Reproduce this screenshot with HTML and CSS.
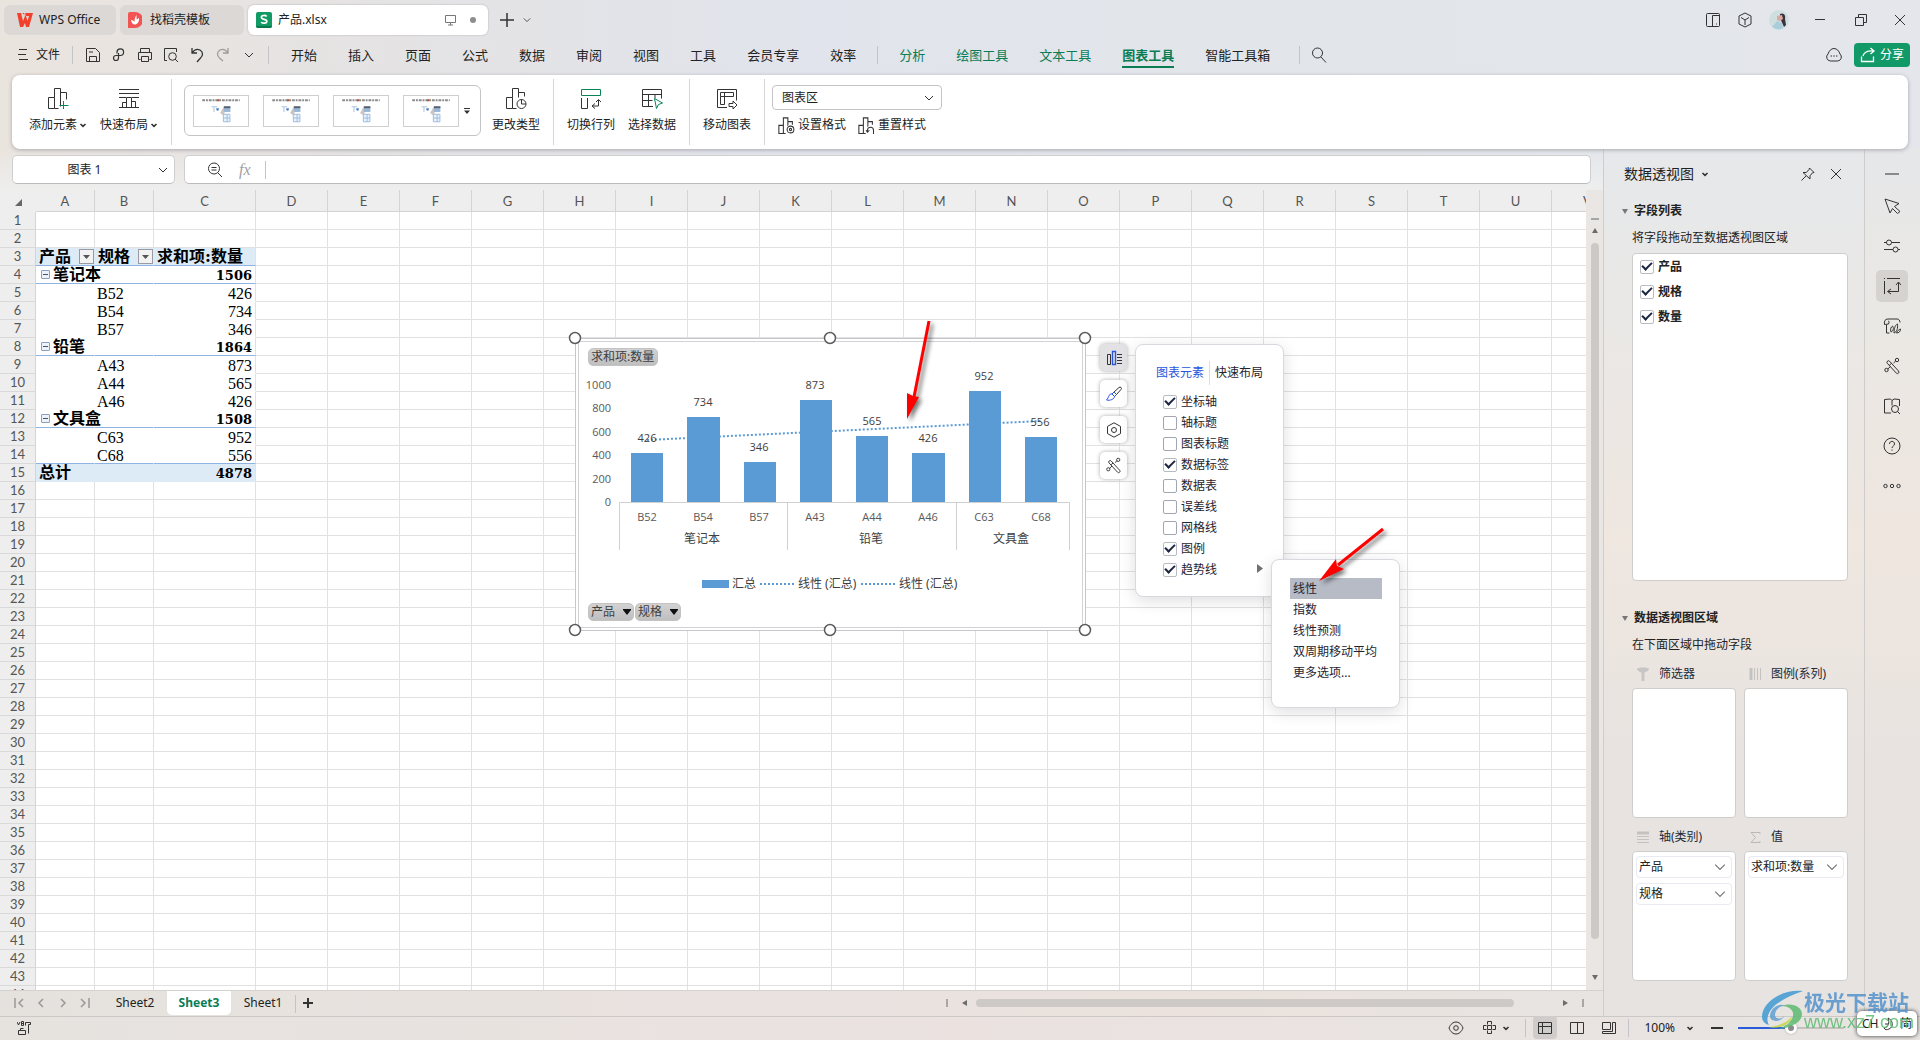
FILE: index.html
```html
<!DOCTYPE html>
<html lang="zh-CN">
<head>
<meta charset="utf-8">
<title>产品.xlsx - WPS Office</title>
<link rel="stylesheet" href="styles.css">
</head>
<body>
<svg class="defs" aria-hidden="true">
  <symbol id="chev" viewBox="0 0 10 10"><path d="M1 3l4 4 4-4"/></symbol>
  <symbol id="chev-s" viewBox="0 0 8 8"><path d="M1.500 3L4 5.400 6.500 3" stroke-width="1.600"/></symbol>
  <symbol id="wand" viewBox="0 0 18 18"><path d="M4.300 6.300a1.500 1.500 0 0 1 2.300-2l8.900 9.700a1.500 1.500 0 0 1-2.200 2.100zM6.300 8.300l2.300-2M12.600 4.200L10.500 6M4.800 12l2.700-2.500"/><circle cx="14" cy="3" r="1.700"/><circle cx="3.500" cy="13" r="1.700"/></symbol>
  <symbol id="bars" viewBox="0 0 24 24"><path d="M2.500 23.500v-11h6v11zM8.500 12.500v-10h6v6M14.500 5.500v17M14.500 7.500h6v4M8.500 23.500h3"/></symbol>
  <symbol id="mini" viewBox="0 0 56 32">
    <path d="M8 4.500h40" stroke="#8a8a8a" stroke-width="2" stroke-dasharray="3 1 2 1"/>
    <path d="M24 4.500h2" stroke="#b4552d" stroke-width="2"/>
    <path d="M18 11.500h6M20.500 12v5" stroke="#a8bdd8"/><path class="fine" d="M23 13h3l-1 3-2-1z" fill="#4a80c4"/>
    <path class="fine" d="M27 18l3-5 4-2-2 6-1 4z" fill="#cdc6c3"/>
    <rect class="fine" x="31" y="11" width="7" height="6" fill="#9bb7d6"/><rect class="fine" x="31" y="11" width="7" height="2" fill="#59616b"/>
    <path d="M30.500 19.500h7v8h-7zM30.500 23.500h7M34.500 19.500v8" fill="#eaf2fa" stroke="#9bbbe0"/>
  </symbol>
</svg>
<div class="app">
  <header class="titlebar">
    <div class="doc-tabs">
      <button class="doc-tab wps"><svg width="16" height="14" viewBox="0 0 16 14"><path class="fine" d="M0 0h4l2 8 2-5-1-3h9l-4 14H9L8 10l-2 4H3zM5 0l3 0 2.500 8L12 3H9z" fill="#f3402c" fill-rule="evenodd"/></svg><span>WPS Office</span></button>
      <button class="doc-tab tpl"><svg width="14" height="16" viewBox="0 0 14 16"><path class="fine" d="M0 2a2 2 0 0 1 2-2h5a8 8 0 0 1 0 16H0z" fill="#f15453"/><path class="fine" d="M3 8c2 0 3 1 3.500 2C6.500 7 7 5 8.500 3c0 2 0 3 .2 4.500L11 6c.5 4-2 6.500-4 6.500S3.500 11 3 8z" fill="#fff"/></svg><span>找稻壳模板</span></button>
      <button class="doc-tab active"><svg width="16" height="16" viewBox="0 0 16 16"><rect class="fine" width="16" height="16" rx="2" fill="#119a64"/><path class="fine" d="M0 14h16v0a2 2 0 0 1-2 2H2a2 2 0 0 1-2-2z" fill="#0a7a4c"/><path d="M10.700 4.500C9.500 3 5.400 3 5.400 5.300c0 2.700 5.400 1.400 5.400 4 0 2.400-4.300 2.400-5.600.7" stroke="#fff" stroke-width="1.700"/></svg><span class="grow">产品.xlsx</span><svg width="14" height="14" viewBox="0 0 14 14" stroke="#777"><path d="M1.500 2.500h10v7h-10zM4 12h5M6.500 9.500V12"/></svg><i class="dot"></i></button>
      <button class="bare" aria-label="新建"><svg width="14" height="14" viewBox="0 0 14 14" stroke-width="1.500"><path d="M7 0v14M0 7h14"/></svg></button>
      <button class="bare" aria-label="更多标签"><svg width="8" height="8"><use href="#chev"/></svg></button>
    </div>
    <div class="win">
      <svg width="16" height="16" viewBox="0 0 16 16"><path d="M2.500 1.500h11a1 1 0 0 1 1 1v11a1 1 0 0 1-1 1h-11a1 1 0 0 1-1-1v-11a1 1 0 0 1 1-1zM7.500 14V3.500h7M11 12h1"/></svg>
      <svg width="16" height="16" viewBox="0 0 16 16"><path d="M8 1l6 3v8l-6 3-6-3V4zM4 5.500l4 2.500 4-2.500M8 8v5"/></svg>
      <svg width="20" height="20" viewBox="0 0 20 20"><circle class="fine" cx="10" cy="10" r="10" fill="#cfdfe0"/><path class="fine" d="M11 4c4-2 6 2 5 5l1 6-2 2-4-9z" fill="#39313c"/><path class="fine" d="M8 6l5-1 1 4-3 2-3-1z" fill="#dba9a0"/><path class="fine" d="M3 17l5-6 5 2 1 5a9 9 0 0 1-9 0z" fill="#a9cdda"/></svg>
      <button class="bare" aria-label="最小化"><svg width="12" height="12" viewBox="0 0 12 12"><path d="M1 5.500h10"/></svg></button>
      <button class="bare" aria-label="还原"><svg width="14" height="14" viewBox="0 0 14 14"><path d="M1.500 4.500h8v8h-8zM4.500 4.500v-3h8v8h-3"/></svg></button>
      <button class="bare" aria-label="关闭"><svg width="12" height="12" viewBox="0 0 12 12"><path d="M1 1l10 10M11 1L1 11"/></svg></button>
    </div>
  </header>

  <div class="menubar">
    <button class="file"><svg width="10" height="12" viewBox="0 0 10 12"><path d="M1 .5h8M0 5.500h8M1 10.500h9"/></svg>文件</button>
    <i class="vsep"></i>
    <div class="qat">
      <button aria-label="保存"><svg width="16" height="16" viewBox="0 0 16 16"><path d="M1.500 14.500v-13h9l4 4v9zM4.500 14.500v-5h7v5M4 5h4"/></svg></button>
      <button aria-label="输出"><svg width="16" height="16" viewBox="0 0 16 16"><path d="M6 6.500V5a3.300 3.300 0 1 1 3.300 3.500H5a2.500 2.500 0 1 0 2.500 2.500V6" stroke-width="1.200"/></svg></button>
      <button aria-label="打印"><svg width="16" height="16" viewBox="0 0 16 16"><path d="M3.500 5V1.500h9V5M3.500 12.500h-2V5.500h13v7h-2M4.500 9.500h7v5h-7z"/></svg></button>
      <button aria-label="打印预览"><svg width="16" height="16" viewBox="0 0 16 16"><path d="M4 13.500H1.500v-12h12V5M12 12l3 3"/><circle cx="9.500" cy="9.500" r="3.800"/></svg></button>
      <button aria-label="撤销"><svg width="16" height="16" viewBox="0 0 16 16" stroke-width="1.300"><path d="M3 1v5h5M3 6c2-3 5-4.500 8-3 3.500 2 3 6 .5 8L8 15"/></svg></button>
      <button aria-label="恢复" class="off"><svg width="16" height="16" viewBox="0 0 16 16" stroke-width="1.300"><path d="M13 1v5H8M13 6c-2-3-5-4.500-8-3-3.500 2-3 6-.5 8L8 14"/></svg></button>
      <button aria-label="更多"><svg width="10" height="10"><use href="#chev"/></svg></button>
    </div>
    <i class="vsep"></i>
    <nav class="menu">
      <button>开始</button><button>插入</button><button>页面</button><button>公式</button><button>数据</button><button>审阅</button><button>视图</button><button>工具</button><button>会员专享</button><button>效率</button>
      <i class="vsep"></i>
      <button class="ctx">分析</button><button class="ctx">绘图工具</button><button class="ctx">文本工具</button><button class="ctx current">图表工具</button><button>智能工具箱</button>
      <i class="vsep"></i>
    </nav>
    <button class="bare search" aria-label="搜索"><svg width="16" height="16" viewBox="0 0 16 16"><circle cx="6.500" cy="6" r="5"/><path d="M10 10l5 5.500"/></svg></button>
    <div class="menu-end">
      <svg width="16" height="16" viewBox="0 0 16 16"><path d="M4.500 14a4 4 0 0 1-2.500-7C3 4 5 1.500 8 1.500S13 4 14 7a4 4 0 0 1-2.500 7zM4.500 9h1.500M7.300 9h1.500M10 9h1.500"/></svg>
      <button class="share"><svg width="16" height="16" viewBox="0 0 16 16" stroke="#fff" stroke-width="1.300"><path d="M1.500 9.500v5h12v-5M3 9c1-4 4-5.500 10.500-5M10.500 1L14 4l-3.500 3"/></svg>分享</button>
    </div>
  </div>

  <section class="ribbon">
    <div class="group">
      <button class="big"><svg width="24" height="24" viewBox="0 0 24 24"><path d="M2.500 22.500v-11h6v11zM8.500 11.500v-9h6v18M14.500 6.500h6v7M8.500 22.500h4"/><path d="M17.500 15v8M13.500 19.500h9" stroke="#0b8457"/></svg><span>添加元素<svg width="8" height="8"><use href="#chev-s"/></svg></span></button>
      <button class="big"><svg width="24" height="24" viewBox="0 0 24 24"><path d="M2 3.500h20M2 7.500h20M2 11.500h7M15 11.500h7M2 21.500h20M5.500 21.500v-5h4M9.500 21.500v-10h5v10M14.500 15.500h4v6"/></svg><span>快速布局<svg width="8" height="8"><use href="#chev-s"/></svg></span></button>
    </div>
    <div class="gallery">
      <button aria-label="样式 1"><svg width="54" height="30" viewBox="0 0 56 32"><use href="#mini"/></svg></button>
      <button aria-label="样式 2"><svg width="54" height="30" viewBox="0 0 56 32"><use href="#mini"/></svg></button>
      <button aria-label="样式 3"><svg width="54" height="30" viewBox="0 0 56 32"><use href="#mini"/></svg></button>
      <button aria-label="样式 4"><svg width="54" height="30" viewBox="0 0 56 32"><use href="#mini"/></svg></button>
      <svg class="more" width="6" height="6" viewBox="0 0 6 6"><path class="fine" d="M0 0h6v1H0zM0 2.500h6L3 6z" fill="#333"/></svg>
    </div>
    <div class="group type">
      <button class="big"><svg width="24" height="24" viewBox="0 0 24 24"><path d="M2.500 22.500v-11h6v11zM8.500 11.500v-9h6v9M14.500 6.500h6v4M8.500 22.500h4"/><circle cx="17.500" cy="18" r="4.500"/><path d="M17.500 13.500V18h4.500"/></svg><span>更改类型</span></button>
    </div>
    <div class="group">
      <button class="big"><svg width="24" height="24" viewBox="0 0 24 24"><path d="M2.500 3.500h19v6h-19z" stroke="#0b8457"/><path d="M2.500 12v10.500h6V12M13 20h6.500v-6M16 17.500L13 20l3 2.500M17 16l2.500-2.500L22 16"/></svg><span>切换行列</span></button>
      <button class="big"><svg width="24" height="24" viewBox="0 0 24 24"><path d="M13 20.500H2.500v-17h19v9M2.500 8.500h19M2.500 14.500h10M8.500 8.500v12M15 8.500v4"/><path d="M14.500 12.500l8 4.500-4 1.500-2 4z" stroke="#0b8457"/></svg><span>选择数据</span></button>
    </div>
    <div class="group">
      <button class="big"><svg width="24" height="24" viewBox="0 0 24 24"><path d="M12 21.500H2.500v-18h19v11M5.500 6.500h13v4h-13zM5.500 10.500v8M9.500 6.500v12h-4M14 17.500h4v-2.500l4 4-4 4v-2.500h-4z"/></svg><span>移动图表</span></button>
    </div>
    <div class="format">
      <div class="select"><select aria-label="图表对象"><option>图表区</option></select><svg width="10" height="10"><use href="#chev"/></svg></div>
      <div class="pair">
        <button><svg width="18" height="18" viewBox="0 0 24 24" stroke-width="1.400"><use href="#bars"/><circle class="fine" cx="18" cy="18" r="6" fill="#fff"/><circle cx="18" cy="18" r="4.500"/><circle cx="18" cy="18" r="1.500"/></svg>设置格式</button>
        <button><svg width="18" height="18" viewBox="0 0 24 24" stroke-width="1.400"><use href="#bars"/><circle class="fine" cx="18" cy="19" r="6" fill="#fff"/><path d="M14 21v-2a4 4 0 0 1 8 0v5M12 19l2 2.500 2.500-2.500"/></svg>重置样式</button>
      </div>
    </div>
  </section>

  <main class="main">
    <div class="book">
      <div class="formula-row">
        <div class="namebox"><input type="text" value="图表 1" aria-label="名称框"><svg width="10" height="10"><use href="#chev"/></svg></div>
        <div class="formula"><svg width="16" height="16" viewBox="0 0 16 16"><circle cx="7" cy="6.500" r="5.500"/><path d="M11 11l4 4M4.500 5.500h5M4.500 8h5"/></svg><span class="fx">fx</span><i class="vsep"></i><input type="text" aria-label="编辑栏"></div>
      </div>
      <div class="sheet-wrap">
        <div class="sheet">
          <table class="grid" id="grid"></table>

          <div class="chart">
            <svg class="plot" viewBox="575 338 511 293">
              <rect x="575.500" y="338.500" width="510" height="292" fill="#fff" stroke="#c6c7cb"/>
              <rect x="578.500" y="341.500" width="504" height="286" stroke="#d2d3d7"/>
              <g stroke="#d0d0d0"><path d="M619.500 550V502.500h450V550M787.500 502.500V550M956.500 502.500V550"/></g>
              <path d="M647 440L1041 421" stroke="#5b9bd5" stroke-width="2" stroke-dasharray="2 2"/>
              <g class="fine" fill="#5b9bd5">
                <rect x="631" y="453" width="32" height="49"/><rect x="687" y="417" width="33" height="85"/><rect x="744" y="462" width="32" height="40"/><rect x="800" y="400" width="32" height="102"/><rect x="856" y="436" width="32" height="66"/><rect x="912" y="453" width="33" height="49"/><rect x="969" y="391" width="32" height="111"/><rect x="1025" y="437" width="32" height="65"/><rect x="702" y="580" width="27" height="8"/>
              </g>
              <g class="num" text-anchor="middle"><text x="647" y="442">426</text><text x="703" y="406">734</text><text x="759" y="451">346</text><text x="815" y="389">873</text><text x="872" y="425">565</text><text x="928" y="442">426</text><text x="984" y="380">952</text><text x="1040" y="426">556</text></g>
              <g class="num axis" text-anchor="end"><text x="611" y="389">1000</text><text x="611" y="412">800</text><text x="611" y="436">600</text><text x="611" y="459">400</text><text x="611" y="483">200</text><text x="611" y="506">0</text></g>
              <g class="num axis" text-anchor="middle"><text x="647" y="521">B52</text><text x="703" y="521">B54</text><text x="759" y="521">B57</text><text x="815" y="521">A43</text><text x="872" y="521">A44</text><text x="928" y="521">A46</text><text x="984" y="521">C63</text><text x="1041" y="521">C68</text></g>
              <g class="han" text-anchor="middle"><text x="702" y="543">笔记本</text><text x="871" y="543">铅笔</text><text x="1011" y="543">文具盒</text></g>
              <path d="M760 584h34M861 584h34" stroke="#5b9bd5" stroke-width="2" stroke-dasharray="2 2"/>
              <g class="han"><text x="732" y="588">汇总</text><text x="798" y="588">线性 (汇总)</text><text x="899" y="588">线性 (汇总)</text></g>
              <g fill="#fff" stroke="#5c5c5c" stroke-width="1.500"><circle cx="575" cy="338" r="5.500"/><circle cx="830" cy="338" r="5.500"/><circle cx="1085" cy="338" r="5.500"/><circle cx="575" cy="630" r="5.500"/><circle cx="830" cy="630" r="5.500"/><circle cx="1085" cy="630" r="5.500"/></g>
            </svg>
            <button class="tag value">求和项:数量</button>
            <div class="tags"><button class="tag">产品<svg width="8" height="6" viewBox="0 0 8 6"><path class="fine" d="M0 0h8v1L4 6 0 1z" fill="#111"/></svg></button><button class="tag">规格<svg width="8" height="6" viewBox="0 0 8 6"><path class="fine" d="M0 0h8v1L4 6 0 1z" fill="#111"/></svg></button></div>
          </div>

          <div class="floaters">
            <button class="on" aria-label="图表元素"><svg width="16" height="16" viewBox="0 0 16 16"><path d="M1.500 4.500h3v10h-3zM11 4.500h5M11 7.500h5M11 10.500h5M11 13.500h5"/><path d="M6.500 1.500h3v13h-3z" stroke="#2a55dd" stroke-width="1.400"/></svg></button>
            <button aria-label="图表样式"><svg width="16" height="16" viewBox="0 0 16 16"><path d="M8 6l5-4.500a1.300 1.300 0 0 1 2 2L10.500 8.500z"/><path d="M8 6l2.500 2.500-2 2L6 8zM6 8c-3-1-3 3.500-5.500 6C4 15 8.500 13 8.500 10.500z" stroke="#2a55dd"/></svg></button>
            <button aria-label="设置"><svg width="16" height="16" viewBox="0 0 16 16"><path d="M8 .8l6.500 3.600v7.200L8 15.200l-6.500-3.600V4.400z"/><circle cx="8" cy="8" r="2.500"/></svg></button>
            <button aria-label="智能美化"><svg width="17" height="17"><use href="#wand"/></svg></button>
          </div>

          <div class="popup elements">
            <div class="ptabs"><button class="sel">图表元素</button><i></i><button>快速布局</button></div>
            <label><input type="checkbox" checked>坐标轴</label>
            <label><input type="checkbox">轴标题</label>
            <label><input type="checkbox">图表标题</label>
            <label><input type="checkbox" checked>数据标签</label>
            <label><input type="checkbox">数据表</label>
            <label><input type="checkbox">误差线</label>
            <label><input type="checkbox">网格线</label>
            <label><input type="checkbox" checked>图例</label>
            <label class="sub"><input type="checkbox" checked>趋势线<svg width="6" height="9" viewBox="0 0 6 9"><path class="fine" d="M0 0l6 4.500L0 9z" fill="#707070"/></svg></label>
          </div>
          <div class="popup trend">
            <button class="hot">线性</button><button>指数</button><button>线性预测</button><button>双周期移动平均</button><button>更多选项...</button>
          </div>
          <svg class="arrow one" width="40" height="110" viewBox="900 316 40 110"><path d="M929 321L914 397" stroke="#f00" stroke-width="3"/><path class="fine" d="M907 419V393l6 3 6 1z" fill="#f00"/></svg>
          <svg class="arrow two" width="76" height="64" viewBox="1314 523 76 64"><path d="M1383 529L1338 565" stroke="#f00" stroke-width="3"/><path class="fine" d="M1319 581l17-22 1 7 7 3z" fill="#f00"/></svg>
        </div>
        <div class="vscroll"><i></i><svg width="6" height="5" viewBox="0 0 6 5"><path class="fine" d="M0 5L3 0l3 5z" fill="#6c6c6c"/></svg><b></b><svg width="6" height="5" viewBox="0 0 6 5"><path class="fine" d="M0 0l3 5 3-5z" fill="#6c6c6c"/></svg></div>
      </div>
      <div class="sheetbar">
        <div class="steps">
          <svg width="10" height="12" viewBox="0 0 10 12"><path d="M1 1v10M9 2L5 6l4 4"/></svg><svg width="10" height="12" viewBox="0 0 10 12"><path d="M7 2L3 6l4 4"/></svg><svg width="10" height="12" viewBox="0 0 10 12"><path d="M3 2l4 4-4 4"/></svg><svg width="10" height="12" viewBox="0 0 10 12"><path d="M9 1v10M1 2l4 4-4 4"/></svg>
        </div>
        <button>Sheet2</button><button class="cur">Sheet3</button><button>Sheet1</button><i class="vsep"></i>
        <button class="add" aria-label="新建工作表"><svg width="10" height="10" viewBox="0 0 10 10" stroke-width="2"><path d="M5 0v10M0 5h10"/></svg></button>
        <div class="hscroll"><i></i><svg width="5" height="6" viewBox="0 0 5 6"><path class="fine" d="M5 0L0 3l5 3z" fill="#6c6c6c"/></svg><b></b><svg width="5" height="6" viewBox="0 0 5 6"><path class="fine" d="M0 0l5 3-5 3z" fill="#6c6c6c"/></svg><i></i></div>
      </div>
    </div>

    <aside class="panel">
      <header><h2>数据透视图</h2><svg width="8" height="8"><use href="#chev-s"/></svg><span class="grow"></span>
        <button class="bare" aria-label="固定"><svg width="14" height="14" viewBox="0 0 14 14"><path d="M8.500 1l4.500 4.500-1.500.3-2.500 3V12L2 5.500h3.300l2.700-3zM5 9L.5 13.500"/></svg></button>
        <button class="bare" aria-label="关闭面板"><svg width="12" height="12" viewBox="0 0 12 12"><path d="M1 1l10 10M11 1L1 11"/></svg></button></header>
      <h3><svg width="6" height="5" viewBox="0 0 6 5"><path class="fine" d="M0 0h6L3 5z" fill="#777"/></svg>字段列表</h3>
      <p>将字段拖动至数据透视图区域</p>
      <div class="fields"><label><input type="checkbox" checked>产品</label><label><input type="checkbox" checked>规格</label><label><input type="checkbox" checked>数量</label></div>
      <h3 class="second"><svg width="6" height="5" viewBox="0 0 6 5"><path class="fine" d="M0 0h6L3 5z" fill="#777"/></svg>数据透视图区域</h3>
      <p>在下面区域中拖动字段</p>
      <div class="areas">
        <section><h4><svg width="14" height="14" viewBox="0 0 14 14"><path class="fine" d="M1 2c0-2 12-2 12 0 0 2-4 3-4.500 4v8h-3V6C5 5 1 4 1 2z" fill="#c8c6c4"/></svg>筛选器</h4><div></div></section>
        <section><h4><svg width="14" height="14" viewBox="0 0 14 14"><path d="M3 1v12" stroke="#c4c2c0" stroke-width="3"/><path d="M6.500 1v12M9.500 1v12M12.500 1v12" stroke="#c4c2c0"/></svg>图例(系列)</h4><div></div></section>
        <section><h4><svg width="14" height="14" viewBox="0 0 14 14"><path d="M1 3h12" stroke="#c4c2c0" stroke-width="3"/><path d="M1 6.500h12M1 9.500h12M1 12.500h12" stroke="#c4c2c0"/></svg>轴(类别)</h4><div><button>产品<svg width="12" height="12" stroke="#777"><use href="#chev"/></svg></button><button>规格<svg width="12" height="12" stroke="#777"><use href="#chev"/></svg></button></div></section>
        <section><h4><svg width="14" height="14" viewBox="0 0 14 14"><path d="M12 4V2.500H3L7.500 7.500 3 12.500h9V11" stroke="#bbb9b7"/></svg>值</h4><div><button>求和项:数量<svg width="12" height="12" stroke="#777"><use href="#chev"/></svg></button></div></section>
      </div>
    </aside>

    <nav class="rail">
      <button class="fold" aria-label="收起"><svg width="14" height="2" viewBox="0 0 14 2"><path d="M0 1h14" stroke="#8a8a8a" stroke-width="2"/></svg></button>
      <button aria-label="选择"><svg width="18" height="18" viewBox="0 0 18 18"><path d="M2 2l14 4.500-4.500 3 5.500 5-2.500 2-5-5L7 16z"/></svg></button>
      <button aria-label="属性"><svg width="18" height="18" viewBox="0 0 18 18"><path d="M1 5.500h3M8.500 5.500H17M1 12.500h9M15 12.500h2"/><circle cx="6" cy="5.500" r="2.500"/><circle cx="12.500" cy="12.500" r="2.500"/></svg></button>
      <button class="on" aria-label="透视"><svg width="18" height="18" viewBox="0 0 18 18"><path d="M4 1.500h13M1.500 4v13M1 1.500h1M15.500 5.500v9H5M13 8l2.500-3L18 8M8 12l-3.500 2.500L8 17"/></svg></button>
      <button aria-label="图表"><svg width="18" height="18" viewBox="0 0 18 18"><path d="M1.500 7.500C1 4 2 2 5 2h9c2 0 3 1.500 3 3.500M3.500 8v8h3M1.500 7.500l4-.5C6.500 5 6 4 5 4M8 15c-1-3 0-5 1.500-6 1.500 2 1 5-1.500 6zM11 16c0-4 1-8 3.500-9 .5 4-.5 8-3.500 9zM13.500 16c1-2.500 2.500-3.500 4-4 0 2.500-1.500 4-4 4z"/></svg></button>
      <button aria-label="美化"><svg width="18" height="18"><use href="#wand"/></svg></button>
      <button aria-label="查阅"><svg width="18" height="18" viewBox="0 0 18 18"><path d="M8 16H1.500V2.500L7.500 2 9 3.500 11 2l5.500.5V9M9 3.500v5M14.500 14.500L17 17"/><circle cx="12" cy="12" r="3.500"/></svg></button>
      <button aria-label="帮助"><svg width="18" height="18" viewBox="0 0 18 18"><circle cx="9" cy="9" r="8"/><path d="M6.500 7c0-3.500 5-3.500 5 0 0 2-2.500 2-2.500 4M9 12.500v1.200"/></svg></button>
      <button aria-label="更多"><svg width="18" height="18" viewBox="0 0 18 18"><circle cx="2.500" cy="9" r="1.700"/><circle cx="9" cy="9" r="1.700"/><circle cx="15.500" cy="9" r="1.700"/></svg></button>
    </nav>
  </main>

  <footer class="status">
    <svg width="14" height="14" viewBox="0 0 14 14"><path d="M0 1l1.500 3L3 1M4.500 .5v4h2v-4zM4.500 2.500h2M8.500 4.500v-3h5v2h-2v9M1.500 13.500v-4h7v4zM3.500 9.500v-2h3"/></svg>
    <span class="grow"></span>
    <svg width="16" height="16" viewBox="0 0 16 16"><path d="M1 8c3-8 11-8 14 0-3 8-11 8-14 0z"/><circle cx="8" cy="8" r="2.300"/></svg>
    <div class="cross"><svg width="14" height="14" viewBox="0 0 14 14"><path d="M4.500 3.500v-3h4v3M9.500 4.500h3v4h-3M8.500 9.500v3h-4v-3M3.500 8.500h-3v-4h3M4.500 4.500h4v4h-4z"/></svg><svg width="8" height="8"><use href="#chev-s"/></svg></div>
    <i class="vsep"></i>
    <div class="views">
      <button class="on" aria-label="普通视图"><svg width="14" height="14" viewBox="0 0 14 14"><path d="M.5 1.500h13v11H.5zM.5 5.500h13M4.500 1.500v11"/></svg></button>
      <button aria-label="页面布局"><svg width="14" height="14" viewBox="0 0 14 14"><path d="M.5 1.500h13v11H.5zM7.500 1.500v11"/></svg></button>
      <button aria-label="分页预览"><svg width="14" height="14" viewBox="0 0 14 14"><path d="M.5 12.500v-2h10v-9h3v11zM.5 8.500v-7h8v7z"/></svg></button>
    </div>
    <i class="vsep"></i>
    <span class="pct">100%</span><svg width="8" height="8"><use href="#chev-s"/></svg>
    <button class="bare zoom-out" aria-label="缩小"><svg width="12" height="2" viewBox="0 0 12 2"><path d="M0 1h12" stroke-width="2"/></svg></button>
    <input class="zoom" type="range" min="0" max="200" value="100" aria-label="缩放">
  </footer>
  <div class="ime"><span>CH</span><svg width="12" height="14" viewBox="0 0 12 14"><path d="M5 1c5 2 6 9 1 11-2 1-4 1-5-1 4-1 6-5 4-10zM2 7h3"/></svg><span>简</span></div>
  <div class="brand">
    <svg width="44" height="40" viewBox="0 0 44 40"><path class="fine" d="M43 1C22-1 2 12 2 27c0 4 3 7 7 8-4-6 0-16 9-22C25 8 34 4 43 1z" fill="#3f9ad4"/><path class="fine" d="M10 26c0-7 8-14 16-10-5-1-11 3-11 9 0 4 6 5 9 1-1 5-14 8-14 0z" fill="#5f9fd0"/><path class="fine" d="M22 16c10-4 20 1 20 8 0 9-12 14-24 15 9-3 16-9 15-16-1-4-5-7-11-7z" fill="#5dbb72"/><path class="fine" d="M8 37c10-1 19-4 24-11 0 8-13 14-24 11z" fill="#c5d84e"/></svg>
    <div><strong>极光下载站</strong><em>www.xz7.com</em></div>
  </div>
</div>
<script src="grid.js"></script>
</body>
</html>
```
FILE: styles.css
```css
* { box-sizing: border-box; }
body { margin: 0; font: 12px/18px "Noto Sans", "Noto Sans CJK SC", sans-serif; color: #222; }
button, input, select { font: inherit; color: inherit; border: 0; background: none; padding: 0; margin: 0; }
h2, h3, h4, p { margin: 0; font-size: 12px; font-weight: 400; }
svg { fill: none; display: block; flex: none; }
svg:not([stroke]) { stroke: #333; }
.fine { stroke: none; }
.defs { position: absolute; width: 0; height: 0; }
.grow { flex: 1; text-align: left; }
.vsep { width: 1px; height: 18px; background: #c4c4c8; flex: none; }
.bare { display: flex; align-items: center; }

.app { position: relative; height: 100vh; min-height: 700px; display: flex; flex-direction: column; overflow: hidden;
  background: linear-gradient(90deg, #eae4de 0, #e5e3e3 18%, #e1e4ec 42%, #e2e6ea 66%, #e4e6ec 100%); }

.titlebar { height: 41px; display: flex; justify-content: space-between; align-items: center; padding: 0 14px 1px 4px; flex: none; }
.doc-tabs { display: flex; align-items: center; gap: 4px; }
.doc-tab { height: 30px; display: flex; align-items: center; gap: 6px; border-radius: 6px; background: #dbd8d6; padding: 0 8px; }
.doc-tab.wps { width: 112px; padding-left: 13px; }
.doc-tab.tpl { width: 124px; gap: 8px; }
.doc-tab.active { width: 240px; background: #fff; box-shadow: 0 0 2px #aaa; }
.dot { width: 6px; height: 6px; border-radius: 3px; background: #8d8d8d; margin: 0 4px 0 6px; }
.doc-tabs .bare { margin-left: 8px; }
.doc-tabs .bare + .bare { margin-left: 5px; }
.win { display: flex; align-items: center; }
.win > :nth-child(2) { margin-left: 16px; }
.win > :nth-child(3) { margin-left: 16px; }
.win .bare { width: 12px; margin-left: 28px; }
.win .bare:nth-of-type(1) { margin-left: 25px; }

.menubar { height: 30px; margin-bottom: 4px; display: flex; align-items: center; padding: 0 10px 2px 18px; flex: none; }
.file { display: flex; align-items: center; gap: 8px; width: 54px; }
.qat { display: flex; margin: 0 6px 0 7px; }
.qat button { width: 26px; display: flex; justify-content: center; align-items: center; }
.qat .off { opacity: .4; }
.menu { display: flex; align-items: center; gap: 31px; margin-left: 22px; font-size: 13px; height: 30px; }
.menu .vsep { margin: 0 -10px; }
.menu .vsep:last-child { margin: 0 0 0 -2px; }
.menu button { height: 26px; }
.menu .ctx { color: #0b7d54; }
.menu .current { font-weight: 700; border-bottom: 2px solid #0b7d54; padding-top: 2px; }
.search { margin-left: 11px; }
.menu-end { margin-left: auto; display: flex; align-items: center; gap: 12px; }
.share { width: 56px; height: 24px; border-radius: 4px; background: #119a68; color: #fff; display: flex; align-items: center; justify-content: center; gap: 4px; }

.ribbon { height: 74px; margin: 0 12px; background: #fff; border-radius: 8px; display: flex; box-shadow: 0 1px 4px #a8a8ac; flex: none; position: relative; z-index: 2; }
.group { display: flex; gap: 13px; padding: 0 13px; margin: 4px 0; border-right: 1px solid #d6d6d6; }
.group:first-child { padding-left: 17px; }
.group.type { padding-left: 11px; }
.big { display: flex; flex-direction: column; align-items: center; gap: 6px; padding-top: 7px; }
.big span { display: flex; align-items: center; gap: 2px; white-space: nowrap; }
.gallery { display: flex; gap: 14px; margin: 10px 0 0 12px; height: 51px; width: 297px; border: 1px solid #c4c4c8; border-radius: 6px; padding: 8px; align-items: center; }
.gallery button { width: 56px; height: 32px; border: 1px solid #cfcfcf; flex: none; }
.gallery .more { margin-left: -9px; }
.format { padding: 10px 0 0 7px; display: flex; flex-direction: column; gap: 6px; }
.select { width: 170px; height: 25px; border: 1px solid #c4c4c8; border-radius: 4px; display: flex; align-items: center; padding: 0 7px 0 9px; }
.select select { appearance: none; flex: 1; outline: 0; }
.pair { display: flex; gap: 11px; padding-left: 5px; }
.pair button { display: flex; align-items: center; gap: 3px; }

.main { flex: 1; display: flex; min-height: 0; }
.book { flex: 1; min-width: 0; display: flex; flex-direction: column; }
.formula-row { height: 41px; padding: 6px 12px 6px 12px; display: flex; gap: 9px; background: linear-gradient(#eeeeee00, #eeeeee); flex: none; }
.namebox, .formula { background: #fff; border: 1px solid #cfcfcf; border-bottom-color: #bbb; border-radius: 5px; display: flex; align-items: center; }
.namebox { width: 163px; padding-right: 6px; }
.namebox input { flex: 1; min-width: 0; text-align: center; padding-right: 2px; }
.formula { flex: 1; padding-left: 22px; }
.formula input { flex: 1; }
.fx { font: italic 16px "Liberation Serif", serif; color: #a0a0a0; margin: 0 14px 0 16px; }
.sheet-wrap { flex: 1; display: flex; min-height: 0; background: #e9e6e4; }
.sheet { flex: 1; min-width: 0; position: relative; overflow: hidden; background: #fff; }
.grid { border-collapse: separate; border-spacing: 0; table-layout: fixed; width: 1692px; }
.grid th { font: 13px/17px Lato, sans-serif; color: #555; background: #eee; border-right: 1px solid #d4d4d4; padding: 0; height: 18px; border-bottom: 1px solid #d9d9d9; }
.grid thead th { height: 22px; border-color: #d4d4d4; padding-top: 2px; }
.grid thead th:first-child { border-color: #eee; }
.grid thead th svg { margin: 2px 0 0 15px; }
.grid td { height: 18px; line-height: 17px; padding: 0; border-right: 1px solid #e1e1e1; border-bottom: 1px solid #e1e1e1; white-space: nowrap; color: #000; font-family: "Liberation Serif", "Noto Sans CJK SC", serif; font-size: 16px; }
.grid td.p { border-color: transparent; max-width: 0; }
.grid td.p:nth-child(4) { border-right-color: #e1e1e1; }
.grid tr.u td.p { border-bottom-color: #8fb4e3; }
.grid tr.fill td.p { background: #ddebf7; background-clip: border-box; }
.grid tr.strong td.p { font-weight: 700; font-family: "DejaVu Serif", "Noto Sans CJK SC", serif; font-size: 13px; }
.grid .cell { display: flex; align-items: center; height: 17px; padding: 0 3px; gap: 3px; }
.grid .cell > span { flex: none; }
.grid tr.strong .cell.han { font-size: 16px; }
.grid .cell.right, .grid .cell.code { padding-top: 2px; }
.grid .cell.right { justify-content: flex-end; }
.grid .cell.code { padding-left: 2px; }
.grid .cell.fold-row { padding-left: 5px; }
.grid .cell i { width: 9px; height: 9px; border: 1px solid #8ba0bf; border-radius: 1px; background: linear-gradient(#3b5680, #3b5680) center/5px 1px no-repeat #eef2f8; flex: none; }
.grid .cell button { width: 15px; height: 15px; border: 1px solid #9a9aa2; background: #f2f2f2; margin-left: auto; margin-right: -3px; display: grid; place-items: center; }

.chart { position: absolute; left: 575px; top: 148px; width: 511px; height: 293px; }
.plot { width: 511px; height: 293px; overflow: visible; }
.plot text { stroke: none; fill: #404040; }
.num { font: 11px "Open Sans", sans-serif; }
.plot .axis text { fill: #595959; }
.han { font-size: 12px; }
.chart .tag { height: 18px; border-radius: 5px; background: linear-gradient(#d2d2d2, #bfbfbf); color: #404040; display: flex; align-items: center; justify-content: space-between; border: 1px solid #c3c3c3; white-space: nowrap; }
.tag.value { position: absolute; left: 13px; top: 10px; width: 70px; padding: 0 2px; }
.tags { position: absolute; left: 13px; top: 265px; display: flex; gap: 1px; }
.tags .tag { width: 46px; padding: 0 2px; }

.floaters { position: absolute; left: 1100px; top: 154px; display: flex; flex-direction: column; gap: 9px; }
.floaters button { width: 27px; height: 27px; border-radius: 5px; background: #fff; box-shadow: 0 0 4px #aaa; display: grid; place-items: center; }
.floaters .on { background: #e2e2e4; }
.popup { position: absolute; background: #fff; border: 1px solid #d8d9de; border-radius: 8px; box-shadow: 0 4px 16px #00000022; color: #1f2430; }
.elements { left: 1135px; top: 154px; width: 149px; height: 253px; padding: 16px 20px; }
.ptabs { display: flex; justify-content: space-between; align-items: center; height: 24px; margin-bottom: 6px; }
.ptabs i { width: 1px; height: 24px; background: #ddd; }
.ptabs .sel { color: #2a55dd; }
.popup label { display: flex; align-items: center; gap: 4px; height: 21px; padding-left: 7px; }
.popup .sub svg { margin: -2px 0 0 36px; }
input[type=checkbox] { appearance: none; width: 14px; height: 14px; border: 1px solid #a3a6b0; border-radius: 2px; background: #fff; display: grid; place-items: center; flex: none; }
input[type=checkbox]:checked { border-color: #b9bbc2; }
input[type=checkbox]:checked::after { content: ""; width: 8px; height: 4px; border: solid #1f2740; border-width: 0 0 2px 2px; rotate: -45deg; margin-top: -3px; }
.trend { left: 1271px; top: 369px; width: 129px; height: 149px; padding: 18px; }
.trend button { display: block; width: 92px; height: 21px; padding-left: 3px; text-align: left; white-space: nowrap; }
.trend .hot { background: #b6bbc6; }
.arrow { position: absolute; filter: drop-shadow(3px 3px 2px #0008); }
.arrow.one { left: 900px; top: 126px; }
.arrow.two { left: 1314px; top: 333px; }

.vscroll { width: 17px; margin-top: 21px; display: flex; flex-direction: column; align-items: center; background: #e9e6e4; padding: 7px 0 2px; }
.vscroll i { width: 8px; height: 2px; background: #a5a5a5; }
.vscroll svg { margin: 8px 0; }
.vscroll b { width: 8px; flex: 1; border-radius: 4px; background: #cdc9c6; margin: 2px 0 28px; }
.sheetbar { height: 26px; border-top: 1px solid #d4d2d0; display: flex; align-items: stretch; background: linear-gradient(90deg, #e5e2dd, #eae2e0 50%, #ebe2dd 75%, #e7e4e1); flex: none; padding-bottom: 1px; }
.steps { display: flex; align-items: center; gap: 12px; padding-left: 14px; width: 103px; }
.steps svg { stroke: #999; stroke-width: 1.5; }
.sheetbar button { width: 64px; }
.sheetbar .cur { background: #fff; color: #0b7d54; font-weight: 700; border-radius: 0 0 5px 5px; height: 24px; }
.sheetbar .vsep { margin-top: 4px; }
.sheetbar .add { width: 24px; display: grid; place-items: center; }
.hscroll { margin-left: auto; width: 41%; padding-right: 19px; display: flex; align-items: center; gap: 14px; }
.hscroll i { width: 2px; height: 8px; background: #a9a6a4; }
.hscroll b { height: 8px; flex: 1; border-radius: 4px; background: #cdc9c6; margin: 0 35px 0 -5px; }

.panel { width: 261px; border-left: 1px solid #cfcdcb; padding: 0 16px 0 28px; background: linear-gradient(#e6e8eb, #eae8e6 20%, #efe7e0 45%, #e8e3e0 70%, #e6e3e1); flex: none; }
.panel header { height: 50px; display: flex; align-items: center; margin-left: -8px; gap: 7px; padding-right: 6px; }
.panel h2 { font-size: 14px; }
.panel header .bare + .bare { margin-left: 8px; }
.panel h3 { font-weight: 700; height: 24px; line-height: 24px; display: flex; align-items: center; gap: 6px; margin-left: -10px; }
.panel h3.second { margin-top: 25px; }
.panel p { height: 30px; line-height: 30px; }
.fields { height: 328px; background: #fff; border: 1px solid #cfcdcb; border-radius: 4px; padding: 0 7px; }
.fields label { display: flex; align-items: center; gap: 4px; height: 25px; font-weight: 700; }
.areas { display: grid; grid-template-columns: 1fr 1fr; gap: 5px 8px; }
.areas h4 { height: 28px; display: flex; align-items: center; gap: 9px; padding-left: 4px; color: #222a38; }
.areas section > div { height: 130px; background: #fff; border: 1px solid #cfcdcb; border-radius: 4px; padding: 4px 3px; display: flex; flex-direction: column; gap: 5px; }
.areas button { height: 22px; border: 1px solid #e9eaf2; border-radius: 4px; display: flex; align-items: center; justify-content: space-between; padding: 0 5px 0 2px; }
.rail { width: 56px; border-left: 1px solid #cfcdcb; padding: 17px 1px 0 0; display: flex; flex-direction: column; align-items: center; gap: 8px; background: linear-gradient(#e6e7e9, #eae8e4 20%, #efe6df 45%, #e8e3e0 70%, #e6e3e1); flex: none; }
.rail button { width: 32px; height: 32px; border-radius: 5px; display: grid; place-items: center; }
.rail .fold { height: 16px; }
.rail .on { background: #d6d2cf; }

.status { height: 24px; border-top: 1px solid #cbc8c6; display: flex; align-items: center; padding: 0 76px 2px 17px; background: linear-gradient(90deg, #e6e3df, #ebe2e0 50%, #e7e4e1); flex: none; }
.cross { display: flex; align-items: center; gap: 5px; margin: 0 15px 0 19px; }
.views { display: flex; gap: 8px; margin: 0 7px; }
.views button { width: 24px; height: 23px; border-radius: 4px; display: grid; place-items: center; }
.views .on { background: #d0cccb; }
.pct { margin: 0 11px 0 15px; }
.zoom-out { margin: 0 15px 0 17px; }
.zoom { appearance: none; width: 106px; height: 14px; background: linear-gradient(90deg, #2a5bdb 50%, #c4c0be 50%) center/100% 2px no-repeat; }
.zoom::-webkit-slider-thumb { appearance: none; width: 12px; height: 12px; border-radius: 6px; background: #8a8a8a; border: 3px solid #fff; box-shadow: 0 0 2px #999; }
.ime { position: absolute; right: 3px; bottom: 4px; width: 60px; height: 25px; border-radius: 5px; background: #fff; box-shadow: 0 0 4px #333; display: flex; align-items: center; justify-content: space-evenly; }
.brand { position: absolute; right: 6px; bottom: 9px; display: flex; align-items: center; opacity: .85; pointer-events: none; }
.brand strong, .brand em { display: block; font: 700 21px/24px "Noto Sans CJK SC", sans-serif; color: #5593cd; }
.brand em { font: 18px/18px "Liberation Sans", sans-serif; color: #5dbb72; }
```
FILE: grid.js
```js
// Builds the worksheet grid and fills in the pivot table in A3:C15.
const rows = {
  3: ['head', '产品', '规格', '求和项:数量'],
  4: ['group', '笔记本', '', 1506], 5: ['item', '', 'B52', 426], 6: ['item', '', 'B54', 734], 7: ['item', '', 'B57', 346],
  8: ['group', '铅笔', '', 1864], 9: ['item', '', 'A43', 873], 10: ['item', '', 'A44', 565], 11: ['item', '', 'A46', 426],
  12: ['group', '文具盒', '', 1508], 13: ['item', '', 'C63', 952], 14: ['item last', '', 'C68', 556],
  15: ['total', '总计', '', 4878]
};
const letters = 'ABCDEFGHIJKLMNOPQRSTUVW'.split('');
const widths = [36, 59, 59, 102].concat(letters.slice(3).map(() => 72));
const drop = '<button aria-label="筛选"><svg width="7" height="4" viewBox="0 0 7 4"><path class="fine" d="M0 0h7L3.500 4z" fill="#555"/></svg></button>';

function cells(row) {
  const [kind, a, b, c] = row;
  if (kind === 'head') {
    return [`<div class="cell han"><span>${a}</span>${drop}</div>`, `<div class="cell han"><span>${b}</span>${drop}</div>`, `<div class="cell han"><span>${c}</span></div>`];
  }
  const first = kind === 'group' ? `<div class="cell han fold-row"><i></i><span>${a}</span></div>` : `<div class="cell han"><span>${a}</span></div>`;
  return [first, `<div class="cell code">${b}</div>`, `<div class="cell right">${c}</div>`];
}

let html = '<colgroup>' + widths.map(w => `<col style="width:${w}px">`).join('') + '</colgroup><thead><tr><th><svg width="7" height="7" viewBox="0 0 7 7"><path class="fine" d="M7 0v7H0z" fill="#666"/></svg></th>' +
  letters.map(l => `<th>${l}</th>`).join('') + '</tr></thead><tbody>';
for (let n = 1; n <= 60; n++) {
  const row = rows[n];
  const blank = '<td></td>';
  if (row) {
    const cls = [];
    if (!row[0].startsWith('item')) cls.push('strong');
    if (row[0] === 'head' || row[0] === 'total') cls.push('fill');
    if (['head', 'group', 'item last'].includes(row[0])) cls.push('u');
    html += `<tr class="${cls.join(' ')}"><th>${n}</th>` + cells(row).map(c => `<td class="p">${c}</td>`).join('') + blank.repeat(letters.length - 3) + '</tr>';
  } else {
    html += `<tr><th>${n}</th>` + blank.repeat(letters.length) + '</tr>';
  }
}
document.getElementById('grid').innerHTML = html + '</tbody>';
```
